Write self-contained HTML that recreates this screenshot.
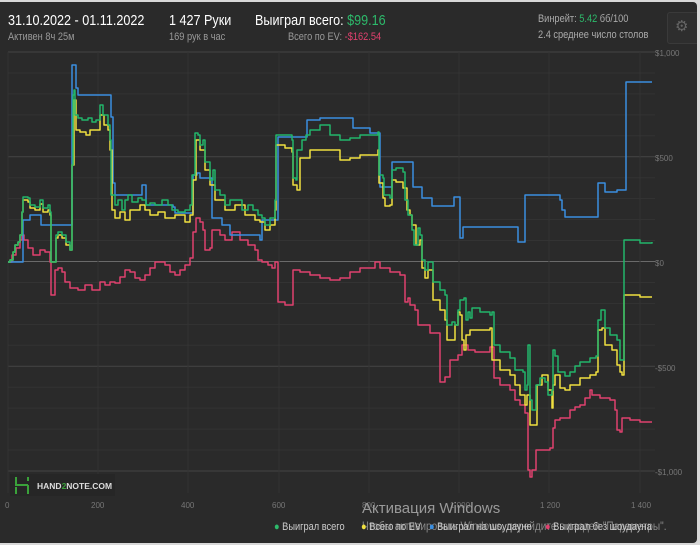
<!DOCTYPE html>
<html><head><meta charset="utf-8"><style>
html,body{margin:0;padding:0;background:#d8d8d8;}
#w{position:absolute;left:0;top:2px;width:697px;height:541px;background:#2a2a2a;border-radius:0 4px 4px 0;overflow:hidden;font-family:"Liberation Sans",sans-serif;color:#ddd;}
.t{position:absolute;white-space:nowrap;}
.n{transform:scaleX(0.84);transform-origin:0 0;}
</style></head><body>
<div id="w">
<div class="t n" style="left:8px;top:10px;font-size:15px;color:#fff;">31.10.2022 - 01.11.2022</div>
<div class="t n" style="left:8px;top:29px;font-size:11px;color:#999;">Активен 8ч 25м</div>
<div class="t n" style="left:169px;top:10px;font-size:15px;color:#fff;">1 427 Руки</div>
<div class="t n" style="left:169px;top:29px;font-size:11px;color:#999;">169 рук в час</div>
<div class="t n" style="left:255px;top:10px;font-size:15px;color:#fff;">Выиграл всего: <span style="color:#2dba6b">$99.16</span></div>
<div class="t n" style="left:288px;top:29px;font-size:11px;color:#999;">Всего по EV: <span style="color:#e0416e">-$162.54</span></div>
<div class="t n" style="left:538px;top:11px;font-size:11px;color:#aaa;">Винрейт: <span style="color:#2dba6b">5.42</span> бб/100</div>
<div class="t n" style="left:538px;top:27px;font-size:11px;color:#aaa;">2.4 среднее число столов</div>
<div style="position:absolute;left:667px;top:10px;width:30px;height:30px;border:1px solid #3a3a3a;border-radius:3px;background:#2e2e2e;"></div>
<div class="t" style="left:675px;top:15px;font-size:15px;color:#666;">⚙</div>
<svg width="697" height="541" style="position:absolute;left:0;top:-2px" xmlns="http://www.w3.org/2000/svg">
<g id="grid" stroke="#333" stroke-width="1"></g>
<g id="lines" fill="none" stroke-width="1.5" stroke-linejoin="round"></g>
<g font-family="Liberation Sans,sans-serif" font-size="8" fill="#777">
<text x="655" y="56">$1,000</text><text x="655" y="161">$500</text><text x="655" y="266">$0</text>
<text x="655" y="371">-$500</text><text x="655" y="475">-$1,000</text>
<text x="5" y="508">0</text><text x="91" y="508">200</text><text x="181" y="508">400</text><text x="272" y="508">600</text>
<text x="362" y="508">800</text><text x="450" y="508">1 000</text><text x="540" y="508">1 200</text><text x="631" y="508">1 400</text>
</g>
<rect x="10" y="474" width="105" height="22" fill="#262626" opacity="0.9"/>
<path d="M16 477v8h12M28 485v9M16 487v7M28 477v4" stroke="#3aa23a" stroke-width="2" fill="none"/>
<text x="37" y="489" font-family="Liberation Sans,sans-serif" font-size="8.5" font-weight="bold" fill="#ddd">HAND<tspan fill="#3aa23a">2</tspan>NOTE.COM</text>
</svg>
<div class="t" style="left:362px;top:498px;font-size:15px;color:#9a9a9a;">Активация Windows</div>
<div class="t n" style="left:362px;top:517px;font-size:12px;color:#8a8a8a;">Чтобы активировать Windows, перейдите в раздел "Параметры".</div>
<div class="t n" style="left:274px;top:519px;font-size:11px;color:#ccc;"><span style="color:#2dba6b">●</span> Выиграл всего</div>
<div class="t n" style="left:361px;top:519px;font-size:11px;color:#ccc;"><span style="color:#f0e040">●</span> Всего по EV</div>
<div class="t n" style="left:429px;top:519px;font-size:11px;color:#ccc;"><span style="color:#3a8ee0">●</span> Выиграл на шоудауне</div>
<div class="t n" style="left:545px;top:519px;font-size:11px;color:#ccc;"><span style="color:#e0416e">●</span> Выиграл без шоудауна</div>
</div>
<script>
var g=document.getElementById('grid'),s='';
for(var k=0;k<=20;k++){var y=52+k*20.95;var c=(k==10)?'#6a6a6a':(k%5==0?'#444':'#333');s+='<line x1="8" x2="655" y1="'+y+'" y2="'+y+'" stroke="'+c+'"/>';}
[8,98,188,279,369,459,549,640].forEach(function(x){s+='<line x1="'+x+'" x2="'+x+'" y1="52" y2="493"/>';});
g.innerHTML=s;
var G="8,262 10,260 13,252 15,245 18,242 20,235 22,212 23,197 28,198 30,205 35,207 40,200 43,208 48,205 50,212 51,262 55,262 56,235 58,232 62,235 66,242 70,250 71,250 72,165 73,95 74,90 75,115 78,118 82,120 88,118 92,122 96,120 100,105 103,115 108,125 110,140 111,195 115,205 118,200 122,210 125,200 128,195 132,202 138,198 142,200 146,205 150,203 155,205 162,200 168,205 172,210 178,212 185,210 190,205 192,175 195,133 198,135 200,145 203,140 205,162 210,180 213,170 215,190 220,195 225,205 230,200 238,200 242,210 248,205 253,210 258,215 262,218 265,225 270,218 275,200 276,135 285,135 290,135 292,140 293,178 296,180 297,150 302,140 306,135 310,130 320,125 330,135 340,140 350,138 360,135 378,132 379,175 383,178 384,195 390,198 392,170 396,168 403,172 405,200 408,215 410,215 412,230 414,245 418,228 420,235 422,260 425,270 428,262 433,282 440,290 445,295 447,325 452,322 455,325 458,310 460,300 464,298 466,320 468,312 470,318 472,308 480,312 490,315 492,312 494,345 500,352 510,358 515,370 523,372 525,390 527,385 528,345 530,400 532,410 535,410 536,385 540,378 545,382 548,395 552,390 553,350 555,356 558,372 565,376 570,372 575,366 580,362 590,358 596,356 598,320 601,310 605,328 610,335 617,340 620,360 622,360 624,240 628,240 640,243 652,242";
var Y="8,262 10,260 13,252 15,245 18,242 20,235 22,212 23,200 28,202 30,208 35,210 40,204 43,212 48,210 50,215 51,262 55,262 56,238 58,235 62,238 66,245 70,250 72,165 74,100 76,130 80,132 86,135 90,130 96,130 100,115 104,125 108,130 110,150 112,210 115,218 120,212 125,220 130,210 140,205 145,210 150,215 158,212 165,218 175,215 185,222 190,215 193,180 196,140 200,150 205,170 210,185 215,200 225,210 235,205 245,215 255,220 260,222 265,230 270,225 275,210 276,145 285,148 292,152 293,185 297,190 300,158 310,150 320,150 330,150 340,160 350,158 360,155 378,150 379,183 383,198 385,206 390,205 392,180 396,182 403,188 407,210 410,215 412,225 414,225 416,245 420,240 422,268 425,278 428,270 433,300 440,310 445,320 447,340 452,340 455,325 458,312 460,315 462,340 464,350 466,335 470,330 480,330 490,328 492,360 500,370 510,375 515,385 520,395 525,405 527,395 530,425 535,425 537,385 542,375 548,390 552,408 553,385 555,375 560,388 565,390 570,385 580,378 590,375 596,372 598,330 602,328 605,345 612,350 617,365 620,372 622,375 624,295 628,295 640,297 652,297";
var B="8,262 22,262 23,220 30,215 40,215 41,225 70,225 72,65 75,65 76,88 78,95 110,95 111,117 113,183 115,195 140,195 142,185 145,185 146,205 173,207 175,213 192,213 193,175 197,173 200,178 212,180 212,218 220,218 222,225 228,225 230,235 257,235 260,240 262,220 275,220 278,137 305,137 307,120 320,118 352,118 353,128 360,128 370,133 378,133 380,187 390,187 392,162 412,162 413,187 420,187 422,198 430,198 432,206 452,206 454,197 460,197 460,238 463,227 517,227 518,242 524,242 525,195 555,195 560,200 562,210 565,217 597,217 598,183 602,183 605,192 615,192 617,190 625,190 626,82 652,82";
var R="8,262 12,255 16,248 20,240 22,235 24,240 28,248 33,255 40,250 45,252 50,262 51,295 55,270 58,268 62,272 65,282 70,288 78,290 85,285 92,290 100,282 105,285 110,282 115,283 120,277 125,270 130,272 135,278 140,280 145,275 150,268 155,262 160,262 165,265 170,272 175,275 180,270 185,265 190,258 193,232 196,218 200,222 203,230 205,250 208,250 210,248 212,230 220,235 225,240 232,232 240,240 248,245 255,250 258,260 262,262 268,265 272,268 275,262 278,302 285,305 290,305 293,270 300,272 305,272 310,275 320,278 330,280 340,278 350,272 360,268 375,262 380,268 390,272 400,275 405,302 408,298 410,305 415,310 418,325 425,325 430,333 440,382 445,377 450,360 458,355 462,345 468,350 475,352 490,347 494,378 500,385 510,390 515,400 520,405 525,413 528,470 530,477 532,470 536,450 545,450 550,448 553,428 555,420 560,418 570,410 575,407 580,405 585,398 590,390 592,395 600,398 610,400 615,410 617,430 620,432 622,418 630,420 640,422 652,422";
function st(p){var a=p.split(' '),o=[a[0]];for(var i=1;i<a.length;i++){var x=a[i].split(',')[0],py=a[i-1].split(',')[1];o.push(x+','+py);o.push(a[i]);}return o.join(' ');}
document.getElementById('lines').innerHTML=
'<polyline points="'+st(R)+'" stroke="#e0416e"/>'+
'<polyline points="'+st(B)+'" stroke="#3a8ee0"/>'+
'<polyline points="'+st(Y)+'" stroke="#f0e040"/>'+
'<polyline points="'+st(G)+'" stroke="#22b56a"/>';
</script>
</body></html>
